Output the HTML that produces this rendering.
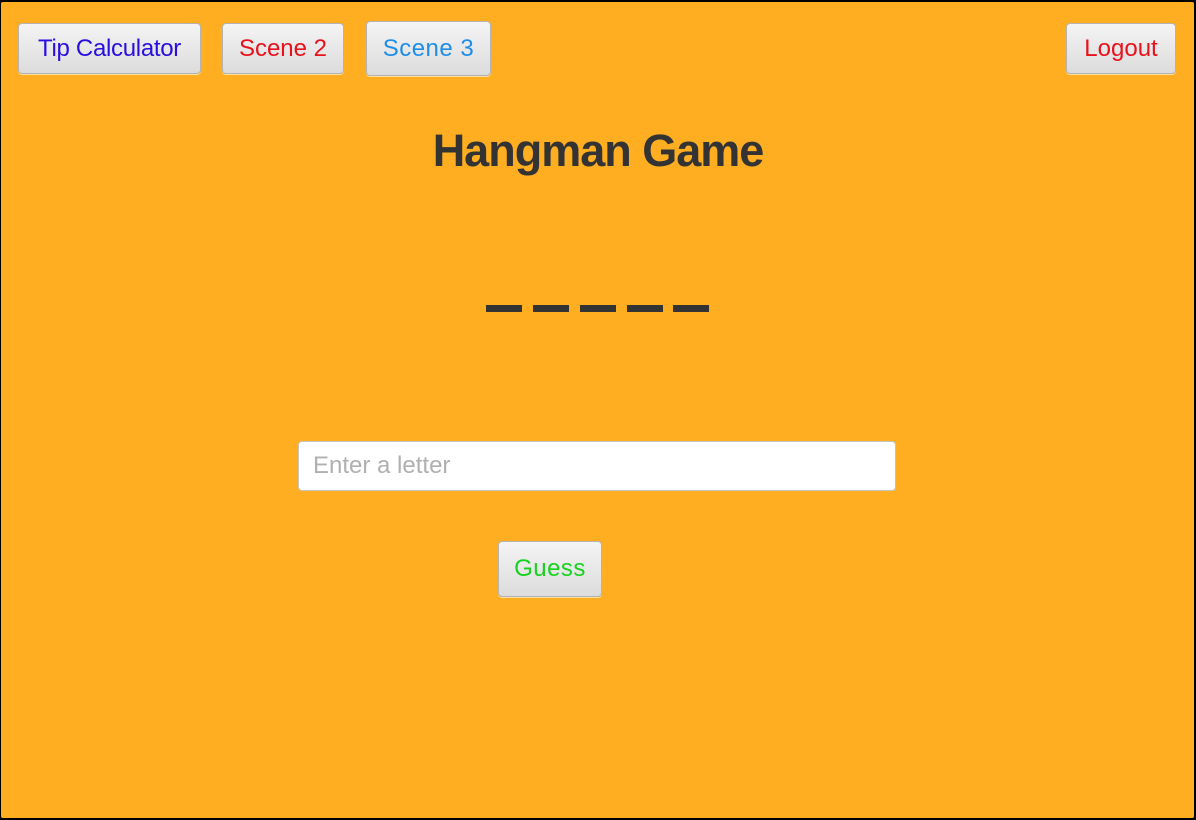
<!DOCTYPE html>
<html><head><style>
html,body{margin:0;padding:0}
body{width:1196px;height:820px;position:relative;overflow:hidden;background:#000;font-family:"Liberation Sans",sans-serif}
.bg{position:absolute;left:1px;top:2px;width:1193px;height:816px;background:#FFAD21;border-radius:2px}
.btn{position:absolute;box-sizing:border-box;border:1px solid #b3b3b3;border-radius:4px;background:linear-gradient(#f4f4f4,#dcdcdc);box-shadow:0 1px 0 #ffe0a0;font-size:24px;display:flex;align-items:center;justify-content:center}
.dash{position:absolute;top:305px;height:7px;width:36px;background:#333}
</style></head><body>
<div class="bg"></div>
<div class="btn" style="left:18px;top:23px;width:183px;height:51px;color:#2a0ee0;letter-spacing:-0.3px">Tip Calculator</div>
<div class="btn" style="left:222px;top:23px;width:122px;height:51px;color:#e8121c">Scene 2</div>
<div class="btn" style="left:366px;top:21px;width:125px;height:55px;color:#1e8ee8;letter-spacing:0.5px">Scene 3</div>
<div class="btn" style="left:1066px;top:23px;width:110px;height:51px;color:#e8121c">Logout</div>
<div style="position:absolute;left:0;width:1196px;top:125px;text-align:center;font-size:45px;font-weight:bold;color:#333;letter-spacing:-1px">Hangman Game</div>
<div class="dash" style="left:486px"></div>
<div class="dash" style="left:533px"></div>
<div class="dash" style="left:580px"></div>
<div class="dash" style="left:627px"></div>
<div class="dash" style="left:673px"></div>
<div style="position:absolute;left:298px;top:441px;width:598px;height:50px;box-sizing:border-box;border:1px solid #c4c4c4;border-radius:4px;background:#fff;color:#b0b0b0;font-size:24px;line-height:48px;padding-left:14px">Enter a letter</div>
<div class="btn" style="left:498px;top:541px;width:104px;height:56px;color:#17d21e;letter-spacing:0.5px">Guess</div>
</body></html>
